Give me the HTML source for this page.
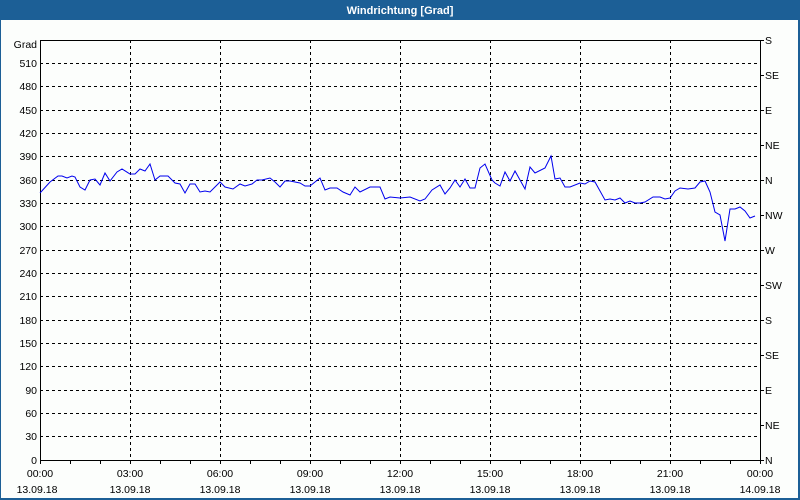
<!DOCTYPE html>
<html><head><meta charset="utf-8"><style>
html,body{margin:0;padding:0;width:800px;height:500px;overflow:hidden;background:#fff}
svg{display:block}
text{font-family:"Liberation Sans",sans-serif;font-size:10.5px;fill:#000}
</style></head><body>
<svg width="800" height="500" xmlns="http://www.w3.org/2000/svg">
<rect x="0" y="0" width="800" height="500" fill="#1c5f96"/>
<rect x="1" y="20" width="797" height="478" fill="#fcfefc"/>
<text x="400" y="14" text-anchor="middle" style="fill:#fff;font-weight:bold;font-size:11px">Windrichtung [Grad]</text>
<g stroke="#000" stroke-width="1" stroke-dasharray="3,3" shape-rendering="crispEdges">
<line x1="40" y1="63.5" x2="760" y2="63.5"/><line x1="40" y1="86.5" x2="760" y2="86.5"/><line x1="40" y1="110.5" x2="760" y2="110.5"/><line x1="40" y1="133.5" x2="760" y2="133.5"/><line x1="40" y1="156.5" x2="760" y2="156.5"/><line x1="40" y1="180.5" x2="760" y2="180.5"/><line x1="40" y1="203.5" x2="760" y2="203.5"/><line x1="40" y1="226.5" x2="760" y2="226.5"/><line x1="40" y1="250.5" x2="760" y2="250.5"/><line x1="40" y1="273.5" x2="760" y2="273.5"/><line x1="40" y1="296.5" x2="760" y2="296.5"/><line x1="40" y1="320.5" x2="760" y2="320.5"/><line x1="40" y1="343.5" x2="760" y2="343.5"/><line x1="40" y1="366.5" x2="760" y2="366.5"/><line x1="40" y1="390.5" x2="760" y2="390.5"/><line x1="40" y1="413.5" x2="760" y2="413.5"/><line x1="40" y1="436.5" x2="760" y2="436.5"/>
<line x1="130.5" y1="40" x2="130.5" y2="460"/><line x1="220.5" y1="40" x2="220.5" y2="460"/><line x1="310.5" y1="40" x2="310.5" y2="460"/><line x1="400.5" y1="40" x2="400.5" y2="460"/><line x1="490.5" y1="40" x2="490.5" y2="460"/><line x1="580.5" y1="40" x2="580.5" y2="460"/><line x1="670.5" y1="40" x2="670.5" y2="460"/>
</g>
<g stroke="#000" stroke-width="1" shape-rendering="crispEdges" fill="none">
<rect x="40.5" y="40.5" width="720" height="420"/>
<path d="M70.5 460v4M100.5 460v4M130.5 460v4M160.5 460v4M190.5 460v4M220.5 460v4M250.5 460v4M280.5 460v4M310.5 460v4M340.5 460v4M370.5 460v4M400.5 460v4M430.5 460v4M460.5 460v4M490.5 460v4M520.5 460v4M550.5 460v4M580.5 460v4M610.5 460v4M640.5 460v4M670.5 460v4M700.5 460v4M730.5 460v4M760.5 460v4M40.5 460v4"/>
<path d="M760 40.5h4M760 75.5h4M760 110.5h4M760 145.5h4M760 180.5h4M760 215.5h4M760 250.5h4M760 285.5h4M760 320.5h4M760 355.5h4M760 390.5h4M760 425.5h4M760 460.5h4"/>
</g>
<polyline fill="none" stroke="#0000ee" stroke-width="1" points="40,193 50,182 58,176 62,176 67,178 72,176 75,177 80,187 85,190 90,180 95,179 100,185 105,173 110,181 117,172 122,169 130,174 135,174 140,169 145,171 150,164 155,180 160,176 168,176 175,183 180,184 185,193 190,184 195,184 200,192 205,191 210,192 220,182 225,187 233,189 240,184 245,186 252,184 257,180 262,180 270,178 275,182 280,187 285,181 290,181 295,182 300,183 305,186 310,186 315,182 320,178 325,190 330,188 337,188 343,192 350,195 355,187 360,192 370,187 380,187 385,199 390,197 400,198 410,197 420,201 425,199 432,190 440,185 445,194 450,188 455,180 460,187 465,179 470,188 475,188 480,168 485,164 492,180 495,183 500,186 505,172 510,181 515,171 525,189 530,167 535,173 545,168 551,156 555,179 560,178 565,187 570,187 580,183 585,184 590,181 595,182 605,200 610,199 615,200 620,198 625,203 630,201 635,203 640,203 645,202 653,197 660,197 665,199 670,198 675,191 680,188 688,189 695,188 700,182 705,181 710,192 715,212 720,215 725,241 730,209 735,209 740,207 745,211 750,218 755,216"/>
<g text-anchor="end">
<text x="37" y="48">Grad</text>
<text x="37" y="67">510</text><text x="37" y="90">480</text><text x="37" y="114">450</text><text x="37" y="137">420</text><text x="37" y="160">390</text><text x="37" y="184">360</text><text x="37" y="207">330</text><text x="37" y="230">300</text><text x="37" y="254">270</text><text x="37" y="277">240</text><text x="37" y="300">210</text><text x="37" y="324">180</text><text x="37" y="347">150</text><text x="37" y="370">120</text><text x="37" y="394">90</text><text x="37" y="417">60</text><text x="37" y="440">30</text><text x="37" y="464">0</text>
</g>
<g>
<text x="765" y="44">S</text><text x="765" y="79">SE</text><text x="765" y="114">E</text><text x="765" y="149">NE</text><text x="765" y="184">N</text><text x="765" y="219">NW</text><text x="765" y="254">W</text><text x="765" y="289">SW</text><text x="765" y="324">S</text><text x="765" y="359">SE</text><text x="765" y="394">E</text><text x="765" y="429">NE</text><text x="765" y="464">N</text>
</g>
<g text-anchor="middle">
<text x="40" y="477">00:00</text><text x="130" y="477">03:00</text><text x="220" y="477">06:00</text><text x="310" y="477">09:00</text><text x="400" y="477">12:00</text><text x="490" y="477">15:00</text><text x="580" y="477">18:00</text><text x="670" y="477">21:00</text><text x="760" y="477">00:00</text>
<text x="37" y="493">13.09.18</text><text x="130" y="493">13.09.18</text><text x="220" y="493">13.09.18</text><text x="310" y="493">13.09.18</text><text x="400" y="493">13.09.18</text><text x="490" y="493">13.09.18</text><text x="580" y="493">13.09.18</text><text x="670" y="493">13.09.18</text><text x="760" y="493">14.09.18</text>
</g>
</svg>
</body></html>
